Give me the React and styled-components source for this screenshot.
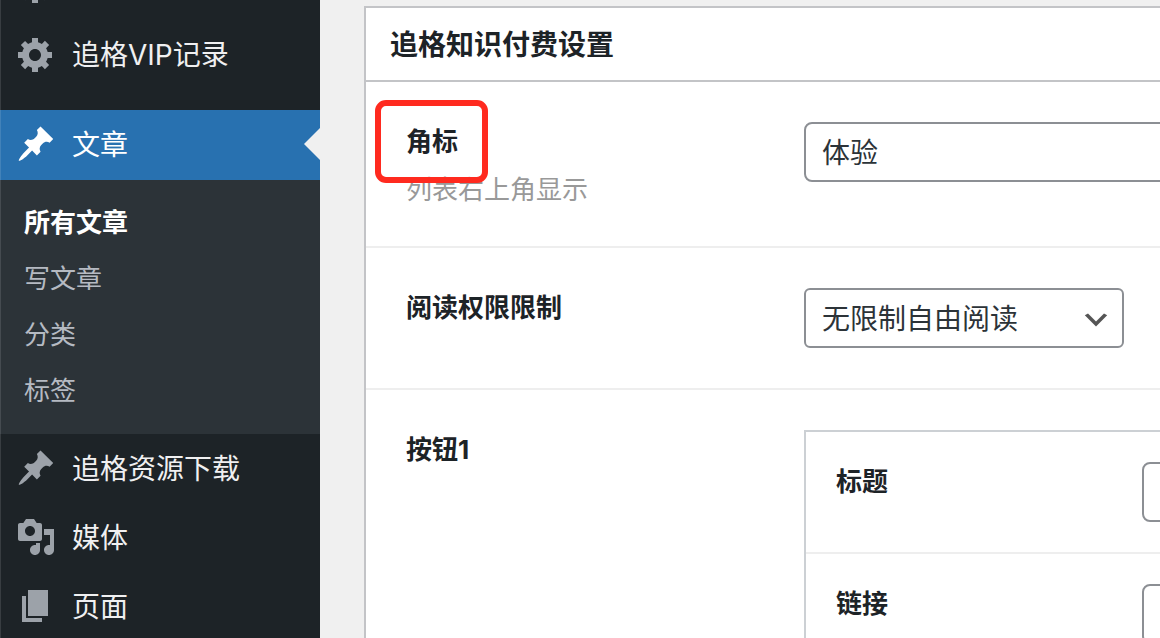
import React from "react";
import styled, { createGlobalStyle, css } from "styled-components";

const GlobalStyle = createGlobalStyle`
  *, *::before, *::after { box-sizing: border-box; }
  body {
    margin: 0;
    overflow: hidden;
    background: #f0f0f0;
    color: #1d2327;
    font-family: Inter, "Noto Sans CJK SC", sans-serif;
  }
  input, select { font: inherit; }
`;

const Page = styled.div`
  display: flex;
  height: 100vh;
  overflow: hidden;
`;

const Sidebar = styled.nav`
  position: relative;
  flex: 0 0 320px;
  overflow: hidden;
  background: #1d2327;

  &::after {
    content: "";
    position: absolute;
    inset: 0 auto 0 0;
    width: 1px;
    background: rgba(255, 255, 255, 0.12);
  }
`;

const Menu = styled.ul`
  margin: -49px 0 0;
  padding: 0;
  list-style: none;
`;

const MenuLink = styled.a`
  position: relative;
  display: flex;
  align-items: flex-start;
  gap: 16px;
  height: ${(p) => (p.$active ? 70 : 69)}px;
  padding: 14px 16px 12px;
  font-size: 28px;
  line-height: 42px;
  text-decoration: none;
  color: ${(p) => (p.$active ? "#fff" : "#f0f0f1")};
  background: ${(p) => (p.$active ? "#2871b0" : "transparent")};

  svg {
    flex: none;
    fill: ${(p) => (p.$active ? "#fff" : "#9ca2a9")};
  }

  ${(p) =>
    p.$active &&
    css`
      &::after {
        content: "";
        position: absolute;
        top: 18px;
        right: 0;
        border: 16px solid transparent;
        border-left-width: 0;
        border-right-color: #f0f0f0;
      }
    `}
`;

const Separator = styled.li`
  height: 21px;
`;

const Submenu = styled.ul`
  margin: 0;
  padding: 15px 0;
  list-style: none;
  background: #2c3338;
`;

const SubmenuLink = styled.a`
  display: block;
  padding: 0 24px;
  font-size: 26px;
  line-height: 56px;
  text-decoration: none;
  font-weight: ${(p) => (p.$current ? 700 : 400)};
  color: ${(p) => (p.$current ? "#fff" : "#b5bac2")};
`;

const Main = styled.main`
  flex: 1;
  min-width: 0;
  overflow: hidden;
  padding: 6px 0 0 44px;
`;

const Panel = styled.section`
  min-width: 1320px;
  border: 2px solid #c3c4c7;
  background: #fff;
`;

const PanelTitle = styled.h2`
  margin: 0;
  padding: 2px 24px 0;
  border-bottom: 2px solid #c3c4c7;
  font-size: 28px;
  font-weight: 700;
  line-height: 70px;
`;

const Field = styled.div`
  position: relative;
  display: flex;
  align-items: flex-start;
  padding: ${(p) => (p.$nested ? 30 : 40)}px;

  & + & {
    border-top: 2px solid #eee;
  }
`;

const FieldTitle = styled.div`
  flex: 0 0 ${(p) => (p.$nested ? 306 : 398)}px;
  font-size: 26px;
`;

const Label = styled.label`
  display: block;
  font-weight: 700;
  line-height: 40px;
`;

const Hint = styled.p`
  margin: 12px 0 0;
  line-height: 32px;
  color: #999;
`;

const Control = styled.div`
  flex: 1;
  min-width: 0;
`;

const TextInput = styled.input`
  display: block;
  width: 100%;
  height: 60px;
  padding: 0 16px 2px;
  border: 2px solid #8c8f94;
  border-radius: 8px;
  background: #fff;
  color: #2c3338;
  font-size: 28px;
`;

const SelectBox = styled.div`
  position: relative;
  width: 320px;

  svg {
    position: absolute;
    top: 16px;
    right: 12px;
    fill: #555;
    pointer-events: none;
  }
`;

const Select = styled.select`
  appearance: none;
  display: block;
  width: 100%;
  height: 60px;
  padding: 2px 48px 0 16px;
  border: 2px solid #8c8f94;
  border-radius: 6px;
  background: #fff;
  color: #2c3338;
  font-size: 28px;
`;

const Group = styled.div`
  border: 2px solid #ccd0d4;
`;

const Highlight = styled.div`
  position: absolute;
  top: 18px;
  left: 9px;
  width: 113px;
  height: 83px;
  border: 6px solid #ff2a1f;
  border-radius: 11px;
  pointer-events: none;
`;

const icons = {
  gear: "M18 12h-2.18c-.17.7-.44 1.35-.81 1.93l1.54 1.54-2.1 2.1-1.54-1.54c-.58.36-1.23.63-1.91.79V19H8v-2.18c-.68-.16-1.33-.43-1.91-.79l-1.54 1.54-2.12-2.12 1.54-1.54c-.36-.58-.63-1.23-.79-1.91H1V9.03h2.17c.16-.7.44-1.35.8-1.94L2.43 5.55l2.1-2.1 1.54 1.54c.58-.37 1.24-.64 1.93-.81V2h3v2.18c.68.16 1.33.43 1.91.79l1.54-1.54 2.12 2.12-1.54 1.54c.36.59.64 1.24.8 1.94H18V12zm-8.5 1.5c1.66 0 3-1.34 3-3s-1.34-3-3-3-3 1.34-3 3 1.34 3 3 3z",
  pin: "M10.44 3.02l1.82-1.82 6.36 6.35-1.83 1.82c-1.05-.68-2.48-.57-3.41.36l-.75.75c-.92.93-1.04 2.35-.35 3.41l-1.83 1.82-2.41-2.41-2.8 2.79c-.42.42-3.38 2.71-3.8 2.29s1.86-3.39 2.28-3.81l2.79-2.79L4.1 9.36l1.83-1.82c1.05.69 2.48.57 3.4-.36l.75-.75c.93-.92 1.05-2.35.36-3.41z",
  media:
    "M13 11V4c0-.55-.45-1-1-1h-1.67L9 1H5L3.67 3H2c-.55 0-1 .45-1 1v7c0 .55.45 1 1 1h10c.55 0 1-.45 1-1zM7 4.5c1.38 0 2.5 1.12 2.5 2.5S8.38 9.5 7 9.5 4.5 8.38 4.5 7 5.62 4.5 7 4.5zM14 6h5v10.5c0 1.38-1.12 2.5-2.5 2.5S14 17.88 14 16.5s1.12-2.5 2.5-2.5c.17 0 .34.02.5.05V9h-3V6zm-4 8.05V13h2v3.5c0 1.38-1.12 2.5-2.5 2.5S7 17.88 7 16.5 8.12 14 9.5 14c.17 0 .34.02.5.05z",
  page: "M6 15V2h10v13H6zm-1 1h8v2H3V5h2v11z",
  chevron: "M5 6l5 5 5-5 2 1-7 7-7-7 2-1z",
};

function Icon({ name, size = 40 }) {
  return (
    <svg width={size} height={size} viewBox="0 0 20 20" aria-hidden="true">
      <path d={icons[name]} />
    </svg>
  );
}

function MenuItem({ icon, active, children, submenu }) {
  return (
    <li>
      <MenuLink href="#" $active={active}>
        <Icon name={icon} />
        {children}
      </MenuLink>
      {submenu && (
        <Submenu>
          {submenu.map((text, i) => (
            <li key={text}>
              <SubmenuLink href="#" $current={i === 0}>
                {text}
              </SubmenuLink>
            </li>
          ))}
        </Submenu>
      )}
    </li>
  );
}

function NestedField({ id, label }) {
  return (
    <Field $nested>
      <FieldTitle $nested>
        <Label htmlFor={id}>{label}</Label>
      </FieldTitle>
      <Control>
        <TextInput id={id} type="text" />
      </Control>
    </Field>
  );
}

export default function App() {
  return (
    <Page>
      <GlobalStyle />
      <Sidebar>
        <Menu>
          <MenuItem icon="gear" />
          <MenuItem icon="gear">追格VIP记录</MenuItem>
          <Separator />
          <MenuItem icon="pin" active submenu={["所有文章", "写文章", "分类", "标签"]}>
            文章
          </MenuItem>
          <MenuItem icon="pin">追格资源下载</MenuItem>
          <MenuItem icon="media">媒体</MenuItem>
          <MenuItem icon="page">页面</MenuItem>
        </Menu>
      </Sidebar>
      <Main>
        <Panel>
          <PanelTitle>追格知识付费设置</PanelTitle>
          <Field>
            <FieldTitle>
              <Label htmlFor="badge">角标</Label>
              <Hint>列表右上角显示</Hint>
            </FieldTitle>
            <Control>
              <TextInput id="badge" type="text" defaultValue="体验" />
            </Control>
            <Highlight />
          </Field>
          <Field>
            <FieldTitle>
              <Label htmlFor="access">阅读权限限制</Label>
            </FieldTitle>
            <Control>
              <SelectBox>
                <Select id="access">
                  <option>无限制自由阅读</option>
                </Select>
                <Icon name="chevron" size={32} />
              </SelectBox>
            </Control>
          </Field>
          <Field>
            <FieldTitle>
              <Label as="div" id="button-one">
                按钮1
              </Label>
            </FieldTitle>
            <Control>
              <Group role="group" aria-labelledby="button-one">
                <NestedField id="button-title" label="标题" />
                <NestedField id="button-link" label="链接" />
              </Group>
            </Control>
          </Field>
        </Panel>
      </Main>
    </Page>
  );
}
